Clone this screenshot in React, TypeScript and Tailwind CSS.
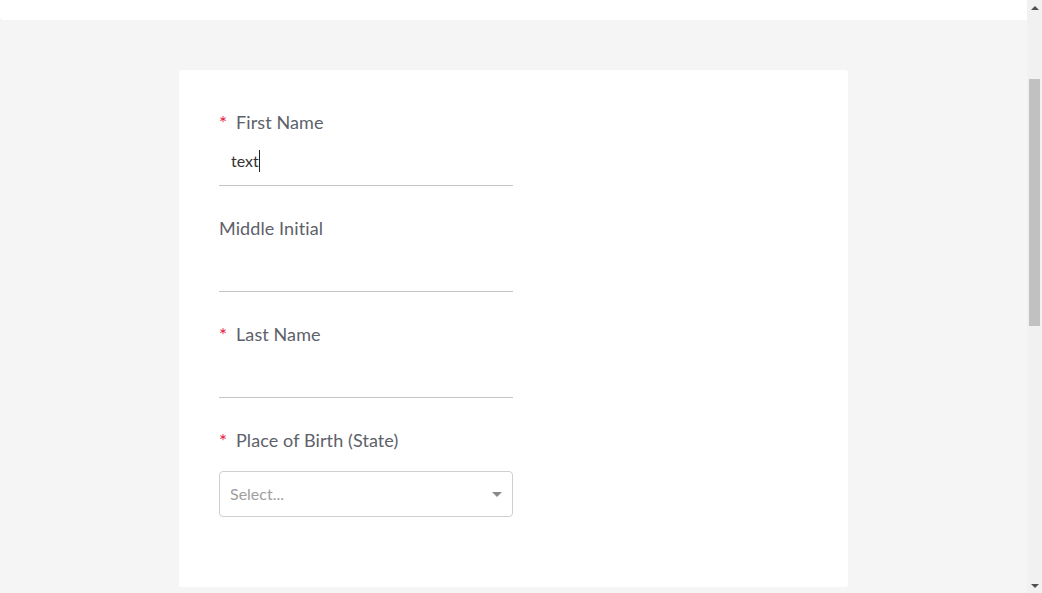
import React from "react";

type FieldProps = {
  label: string;
  required?: boolean;
  value?: string;
  focused?: boolean;
};

function Label({ label, required }: { label: string; required?: boolean }) {
  return (
    <div className="flex items-center h-[24px] text-[18px] leading-[24px] text-[#5d6169] tracking-[0.1px]">
      {required && <span className="text-[#e8173d] w-[17px] text-[19px] leading-[20px] pt-[2px]">*</span>}
      <span>{label}</span>
    </div>
  );
}

function TextField({ label, required, value, focused }: FieldProps) {
  return (
    <div className="flex flex-col w-[294px] h-[106px]">
      <Label label={label} required={required} />
      <div className="mt-[15px] flex items-center h-[24px] pl-[12px] text-[16px] text-[#333]">
        <span>{value}</span>
        {focused && <span className="w-px h-[22px] bg-[#222]"></span>}
      </div>
      <div className="mt-[12px] h-px bg-[#c4c4c4]"></div>
    </div>
  );
}

function SelectField({ label, required }: FieldProps) {
  return (
    <div className="flex flex-col w-[294px]">
      <Label label={label} required={required} />
      <div className="mt-[19px] h-[46px] border border-[#cfcfcf] rounded-[4px] flex items-center justify-between pl-[10px] pr-[10px]">
        <span className="text-[16px] text-[#9e9e9e]">Select...</span>
        <span className="w-0 h-0 border-l-[5px] border-r-[5px] border-t-[5px] border-l-transparent border-r-transparent border-t-[#8a8a8a]"></span>
      </div>
    </div>
  );
}

function Scrollbar() {
  return (
    <div className="w-[15px] h-[593px] bg-[#f1f1f1] flex flex-col items-center">
      <div className="h-[15px] flex items-center justify-center">
        <span className="w-0 h-0 border-l-[4px] border-r-[4px] border-b-[4px] border-l-transparent border-r-transparent border-b-[#505050]"></span>
      </div>
      <div className="mt-[64px] w-[11px] h-[247px] bg-[#c1c1c1]"></div>
      <div className="flex-1"></div>
      <div className="h-[15px] flex items-center justify-center">
        <span className="w-0 h-0 border-l-[4px] border-r-[4px] border-t-[4px] border-l-transparent border-r-transparent border-t-[#505050]"></span>
      </div>
    </div>
  );
}

export default function App() {
  return (
    <div
      className="h-[593px] w-[1042px] overflow-hidden flex bg-[#f5f5f5]"
      style={{ fontFamily: "Lato, 'Open Sans', sans-serif" }}
    >
      <div className="flex-1 flex flex-col overflow-hidden">
        <div className="h-[20px] shrink-0 bg-white rounded-bl-[4px]"></div>
        <div className="pt-[50px] pl-[179px]">
          <div className="w-[669px] bg-white rounded-[3px] pl-[40px] pt-[40px] pb-[70px] flex flex-col">
            <TextField label="First Name" required value="text" focused />
            <TextField label="Middle Initial" />
            <TextField label="Last Name" required />
            <SelectField label="Place of Birth (State)" required />
          </div>
        </div>
      </div>
      <Scrollbar />
    </div>
  );
}
